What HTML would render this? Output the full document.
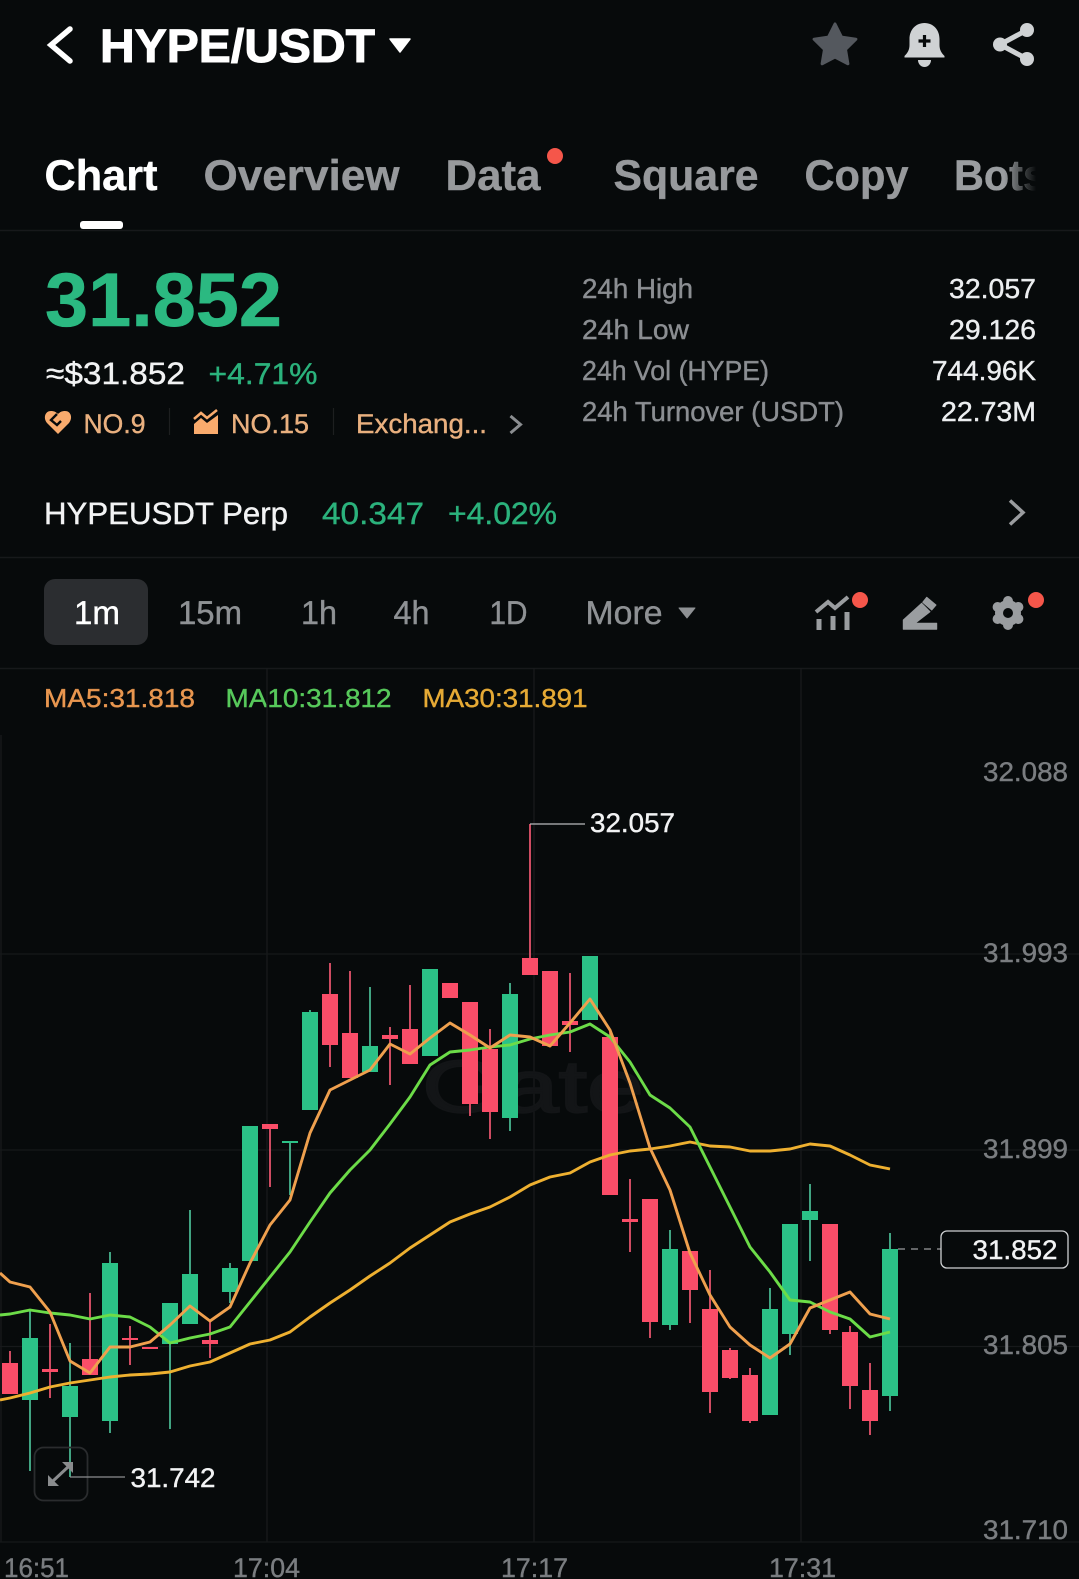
<!DOCTYPE html>
<html><head><meta charset="utf-8"><title>HYPE/USDT</title>
<style>html,body{margin:0;padding:0;background:#070a0b}svg{display:block}
text{font-family:"Liberation Sans",sans-serif;text-rendering:geometricPrecision;fill:currentColor;stroke:currentColor;stroke-width:.4}</style></head>
<body>
<svg xmlns="http://www.w3.org/2000/svg" width="1079" height="1579" viewBox="0 0 1079 1579">
<defs><linearGradient id="f" gradientUnits="userSpaceOnUse" x1="1004" y1="0" x2="1036" y2="0"><stop offset="0" stop-color="#9a9da0"/><stop offset="1" stop-color="#9a9da0" stop-opacity="0"/></linearGradient></defs>
<rect width="1079" height="1579" fill="#070a0b"/>

<!-- header -->
<path d="M70 29L51 45L70 61" fill="none" stroke="#fff" stroke-width="5.500" stroke-linecap="round" stroke-linejoin="miter"/>
<text x="100" y="62" font-size="47" font-weight="700" color="#fff" style="stroke-width:1" textLength="275" lengthAdjust="spacingAndGlyphs">HYPE/USDT</text>
<path d="M390 39H410L400 52Z" fill="#fff" stroke="#fff" stroke-width="1.500" stroke-linejoin="round"/>
<path d="M835 24L841.500 37.100L855.900 39.200L845.500 49.400L847.900 63.800L835 57L822.100 63.800L824.500 49.400L814.100 39.200L828.500 37.100Z" fill="#54585e" stroke="#54585e" stroke-width="3" stroke-linejoin="round"/>
<path d="M924.500 23c-9 0-15 7-15 16v6c0 5-2 8-5 11v1.500h40v-1.500c-3-3-5-6-5-11v-6c0-9-6-16-15-16z" fill="#cfd2d4"/>
<path d="M918 60h13c0 4-3 7-6.500 7s-6.500-3-6.500-7z" fill="#cfd2d4"/>
<path d="M924.500 35v12M918.500 41h12" stroke="#070a0b" stroke-width="3.200"/>
<path d="M1027 30L1000 44.500L1027 59" fill="none" stroke="#cfd2d4" stroke-width="5"/>
<circle cx="1027" cy="30" r="7" fill="#cfd2d4"/><circle cx="1000" cy="44.500" r="7" fill="#cfd2d4"/><circle cx="1027" cy="59" r="7" fill="#cfd2d4"/>

<!-- tabs -->
<g font-size="43" font-weight="700" color="#97999c">
<text x="44.500" y="190" color="#fff" textLength="113" lengthAdjust="spacingAndGlyphs">Chart</text>
<text x="203.500" y="190" textLength="196" lengthAdjust="spacingAndGlyphs">Overview</text>
<text x="445.500" y="190" textLength="95" lengthAdjust="spacingAndGlyphs">Data</text>
<text x="613.500" y="190" textLength="145" lengthAdjust="spacingAndGlyphs">Square</text>
<text x="804.500" y="190" textLength="104" lengthAdjust="spacingAndGlyphs">Copy</text>
<text x="954" y="190" style="fill:url(#f);stroke:url(#f)" textLength="92" lengthAdjust="spacingAndGlyphs">Bots</text>
</g>
<circle cx="555" cy="156" r="8" fill="#f5564a"/>
<rect x="80" y="221" width="43" height="8" rx="3" fill="#fff"/>
<path d="M0 230.500H1079M0 557.500H1079M0 668.500H1079" stroke="#17191b" stroke-width="1.500"/>

<!-- price -->
<text x="45" y="326" font-size="76" font-weight="700" color="#2bb981" style="stroke-width:.6" textLength="237" lengthAdjust="spacingAndGlyphs">31.852</text>
<text x="46" y="384" font-size="31" color="#f2f3f4" textLength="139" lengthAdjust="spacingAndGlyphs">≈$31.852</text>
<text x="208.500" y="384" font-size="30" color="#2bb27c" textLength="109" lengthAdjust="spacingAndGlyphs">+4.71%</text>
<path d="M58 434L47 423c-4-5-2-12 4-12c3 0 5 1 7 3c2-2 4-3 7-3c6 0 8 7 4 12z" fill="#f9ab6d"/>
<path d="M57 414L51 420L57 425L61 421" fill="none" stroke="#070a0b" stroke-width="2.400"/>
<g font-size="27" color="#e9b07f">
<text x="83.500" y="433" textLength="62" lengthAdjust="spacingAndGlyphs">NO.9</text>
<text x="231" y="433" textLength="78" lengthAdjust="spacingAndGlyphs">NO.15</text>
<text x="356" y="433" textLength="131" lengthAdjust="spacingAndGlyphs">Exchang...</text>
</g>
<path d="M194 419L201 413L207 418L217 410" fill="none" stroke="#f9ab6d" stroke-width="2.600"/>
<path d="M194 424L201 418L207 423L218 415V434H194Z" fill="#f9ab6d"/>
<path d="M169.500 408V435M333.500 408V435" stroke="#1d1f20" stroke-width="1.200"/>
<path d="M510.500 416L520.500 424.500L510.500 433" fill="none" stroke="#8a8d90" stroke-width="3"/>

<!-- 24h -->
<g font-size="27.500" color="#8b8e92">
<text x="582" y="298" textLength="111" lengthAdjust="spacingAndGlyphs">24h High</text>
<text x="582" y="339" textLength="107" lengthAdjust="spacingAndGlyphs">24h Low</text>
<text x="582" y="380" textLength="187" lengthAdjust="spacingAndGlyphs">24h Vol (HYPE)</text>
<text x="582" y="421" textLength="262" lengthAdjust="spacingAndGlyphs">24h Turnover (USDT)</text>
</g>
<g font-size="27.500" color="#eceef0">
<text x="949" y="298" textLength="87" lengthAdjust="spacingAndGlyphs">32.057</text>
<text x="949" y="339" textLength="87" lengthAdjust="spacingAndGlyphs">29.126</text>
<text x="932" y="380" textLength="104" lengthAdjust="spacingAndGlyphs">744.96K</text>
<text x="941" y="421" textLength="95" lengthAdjust="spacingAndGlyphs">22.73M</text>
</g>

<!-- perp -->
<text x="44" y="524" font-size="31" color="#f2f3f4" textLength="244" lengthAdjust="spacingAndGlyphs">HYPEUSDT Perp</text>
<text x="322" y="524" font-size="31" color="#2bb27c" textLength="102" lengthAdjust="spacingAndGlyphs">40.347</text>
<text x="448" y="524" font-size="31" color="#2bb27c" textLength="109" lengthAdjust="spacingAndGlyphs">+4.02%</text>
<path d="M1010 500.500L1023 512.500L1010 524.500" fill="none" stroke="#9a9c9f" stroke-width="3.500"/>

<!-- timeframe -->
<rect x="44" y="579" width="104" height="66" rx="11" fill="#2b2d30"/>
<g font-size="33" color="#8e9194">
<text x="74" y="624" color="#fff" textLength="46" lengthAdjust="spacingAndGlyphs">1m</text>
<text x="178" y="624" textLength="64" lengthAdjust="spacingAndGlyphs">15m</text>
<text x="301" y="624" textLength="36" lengthAdjust="spacingAndGlyphs">1h</text>
<text x="393.500" y="624" textLength="36" lengthAdjust="spacingAndGlyphs">4h</text>
<text x="489.500" y="624" textLength="38" lengthAdjust="spacingAndGlyphs">1D</text>
<text x="585.500" y="624" textLength="77" lengthAdjust="spacingAndGlyphs">More</text>
</g>
<path d="M679 608H695L687 618Z" fill="#8e9194" stroke="#8e9194" stroke-linejoin="round"/>
<path d="M816 612L828 602L835 608L848 597" fill="none" stroke="#9a9da0" stroke-width="4"/>
<path d="M819 619V630M833 616V630M847 612V630" fill="none" stroke="#9a9da0" stroke-width="5"/>
<circle cx="860" cy="600" r="8" fill="#f5564a"/>
<path d="M903.300 629.300V620L921.700 603.300L930 611.700L915 623.300H936.700V629.300Z" fill="#9a9da0" stroke="#9a9da0" stroke-linejoin="round"/>
<path d="M926.700 597.300L936 605L931.700 610L922.700 602.300Z" fill="#9a9da0" stroke="#9a9da0" stroke-linejoin="round"/>
<g fill="#9a9da0"><circle cx="1008" cy="613" r="13"/><circle cx="1008" cy="601" r="5"/><circle cx="1018.400" cy="607" r="5"/><circle cx="1018.400" cy="619" r="5"/><circle cx="1008" cy="625" r="5"/><circle cx="997.600" cy="619" r="5"/><circle cx="997.600" cy="607" r="5"/></g>
<circle cx="1008" cy="613" r="5" fill="#070a0b"/>
<circle cx="1036" cy="600" r="8" fill="#f5564a"/>

<!-- MA labels -->
<g font-size="26">
<text x="44" y="707" color="#e8964f" textLength="151" lengthAdjust="spacingAndGlyphs">MA5:31.818</text>
<text x="225.500" y="707" color="#57c95b" textLength="166" lengthAdjust="spacingAndGlyphs">MA10:31.812</text>
<text x="422.500" y="707" color="#e6aa35" textLength="165" lengthAdjust="spacingAndGlyphs">MA30:31.891</text>
</g>

<!-- grid -->
<path d="M1 735V1542M267 668V1542M534 668V1542M801 668V1542" stroke="#191b1d" stroke-width="1.200"/>
<path d="M0 954H1079M0 1150H1079M0 1346.500H1079M0 1542H1079" stroke="#17191b" stroke-width="1.200"/>
<text x="422" y="1112" font-size="74" color="#131517" style="stroke-width:2" textLength="222" lengthAdjust="spacingAndGlyphs">Gate</text>

<!-- wicks -->
<path fill="none" stroke="#48b690" stroke-width="1.800" d="M30 1310V1471M70 1343V1477M110 1252V1433M170 1344V1429M190 1210V1274M230 1263V1303M290 1141V1195M310 1010V1012M370 987V1046M510 983V1131M670 1230V1330M770 1288V1309M790 1334V1355M810 1184V1261M890 1233V1411"/>
<path fill="none" stroke="#e4546c" stroke-width="1.800" d="M10 1351V1363M50 1324V1398M90 1293V1359M130 1326V1365M210 1322V1358M270 1124V1187M330 963V1067M350 971V1033M390 1027V1085M410 985V1029M470 1104V1116M490 1029V1139M530 824V958M570 973V1052M610 1032V1037M630 1179V1252M650 1322V1338M690 1290V1323M710 1270V1413M730 1348V1379M750 1368V1423M830 1330V1334M850 1326V1409M870 1363V1435"/>
<!-- bodies -->
<path fill="none" stroke="#2bc287" stroke-width="16" d="M30 1338V1400M70 1386V1417M110 1263V1421M170 1303V1344M190 1274V1324M230 1268V1292M250 1126V1261M290 1141V1143M310 1012V1110M370 1046V1072M430 969V1056M510 994V1118M590 956V1020M670 1249V1325M770 1309V1415M790 1224V1334M810 1211V1220M890 1249V1396"/>
<path fill="none" stroke="#fa4d68" stroke-width="16" d="M10 1363V1394M50 1369V1372M90 1359V1375M130 1338V1340M150 1347V1349M210 1340V1344M270 1124V1129M330 994V1045M350 1033V1078M390 1035V1039M410 1029V1064M450 983V998M470 1002V1104M490 1049V1112M530 958V975M550 971V1046M570 1021V1025M610 1037V1195M630 1219V1222M650 1199V1322M690 1251V1290M710 1309V1392M730 1350V1378M750 1375V1421M830 1224V1330M850 1332V1386M870 1390V1421"/>

<!-- MA lines -->
<g fill="none" stroke-width="2.900" stroke-linejoin="round">
<polyline stroke="#eeb030" points="0,1400 10,1398 30,1393 50,1387 70,1383 90,1380 110,1377 130,1375 150,1374 170,1372 190,1366 210,1362 230,1353 250,1344 270,1340 290,1332 310,1317 330,1303 350,1290 370,1276 390,1263 410,1248 430,1235 450,1222 470,1214 490,1207 510,1197 530,1185 550,1177 570,1173 590,1162 610,1155 630,1151 650,1149 670,1146 690,1142 710,1146 730,1147 750,1151 770,1151 790,1149 810,1144 830,1146 850,1155 870,1165 890,1169"/>
<polyline stroke="#6cdc48" points="0,1315 10,1314 30,1310 50,1313 70,1315 90,1319 110,1315 130,1317 150,1327 170,1343 190,1338 210,1334 230,1327 250,1302 270,1277 290,1252 310,1222 330,1193 350,1170 370,1150 390,1124 410,1097 430,1065 450,1052 470,1050 490,1047 510,1045 530,1039 550,1035 570,1032 590,1024 610,1037 630,1062 650,1095 670,1108 690,1127 710,1167 730,1207 750,1247 770,1272 790,1300 810,1302 830,1312 850,1319 870,1337 890,1332"/>
<polyline stroke="#efa04e" points="0,1273 10,1282 30,1287 50,1312 70,1361 90,1373 110,1347 130,1347 150,1342 170,1325 190,1306 210,1321 230,1307 250,1263 270,1225 290,1200 310,1133 330,1090 350,1080 370,1070 390,1044 410,1054 430,1038 450,1023 470,1035 490,1048 510,1035 530,1037 550,1046 570,1023 590,999 610,1030 630,1083 650,1148 670,1190 690,1253 710,1295 730,1327 750,1345 770,1358 790,1344 810,1308 830,1300 850,1292 870,1314 890,1319"/>
</g>

<!-- axis labels -->
<g font-size="27" color="#7a7d80">
<text x="983" y="781" textLength="85" lengthAdjust="spacingAndGlyphs">32.088</text>
<text x="983" y="962" textLength="85" lengthAdjust="spacingAndGlyphs">31.993</text>
<text x="983" y="1158" textLength="85" lengthAdjust="spacingAndGlyphs">31.899</text>
<text x="983" y="1354" textLength="85" lengthAdjust="spacingAndGlyphs">31.805</text>
<text x="983" y="1539" textLength="85" lengthAdjust="spacingAndGlyphs">31.710</text>
<text x="4" y="1577" textLength="65" lengthAdjust="spacingAndGlyphs">16:51</text>
<text x="233" y="1577" textLength="67" lengthAdjust="spacingAndGlyphs">17:04</text>
<text x="501" y="1577" textLength="67" lengthAdjust="spacingAndGlyphs">17:17</text>
<text x="769" y="1577" textLength="67" lengthAdjust="spacingAndGlyphs">17:31</text>
</g>

<!-- callouts -->
<path d="M530 824H585" stroke="#b8babc" stroke-width="1.300"/>
<text x="590" y="832" font-size="27" color="#f2f3f4" textLength="85" lengthAdjust="spacingAndGlyphs">32.057</text>
<rect x="34.500" y="1447.500" width="53" height="53" rx="9" fill="none" stroke="#2a2c2e" stroke-width="1.800"/>
<path d="M62 1462H73V1473ZM48 1475V1486H59Z" fill="#8a8c8e"/>
<path d="M68 1467L53 1481" stroke="#8a8c8e" stroke-width="3"/>
<path d="M70 1477H125" stroke="#8c8e90" stroke-width="1.300"/>
<text x="130.500" y="1487" font-size="27" color="#f2f3f4" textLength="85" lengthAdjust="spacingAndGlyphs">31.742</text>
<path d="M898 1249H941" stroke="#9a9c9e" stroke-width="1.300" stroke-dasharray="7 6"/>
<rect x="941" y="1231" width="127" height="37" rx="6" fill="#070a0b" stroke="#cfd1d3" stroke-width="1.300"/>
<text x="972.500" y="1259" font-size="27" color="#f2f3f4" textLength="85" lengthAdjust="spacingAndGlyphs">31.852</text>
</svg>
</body></html>
